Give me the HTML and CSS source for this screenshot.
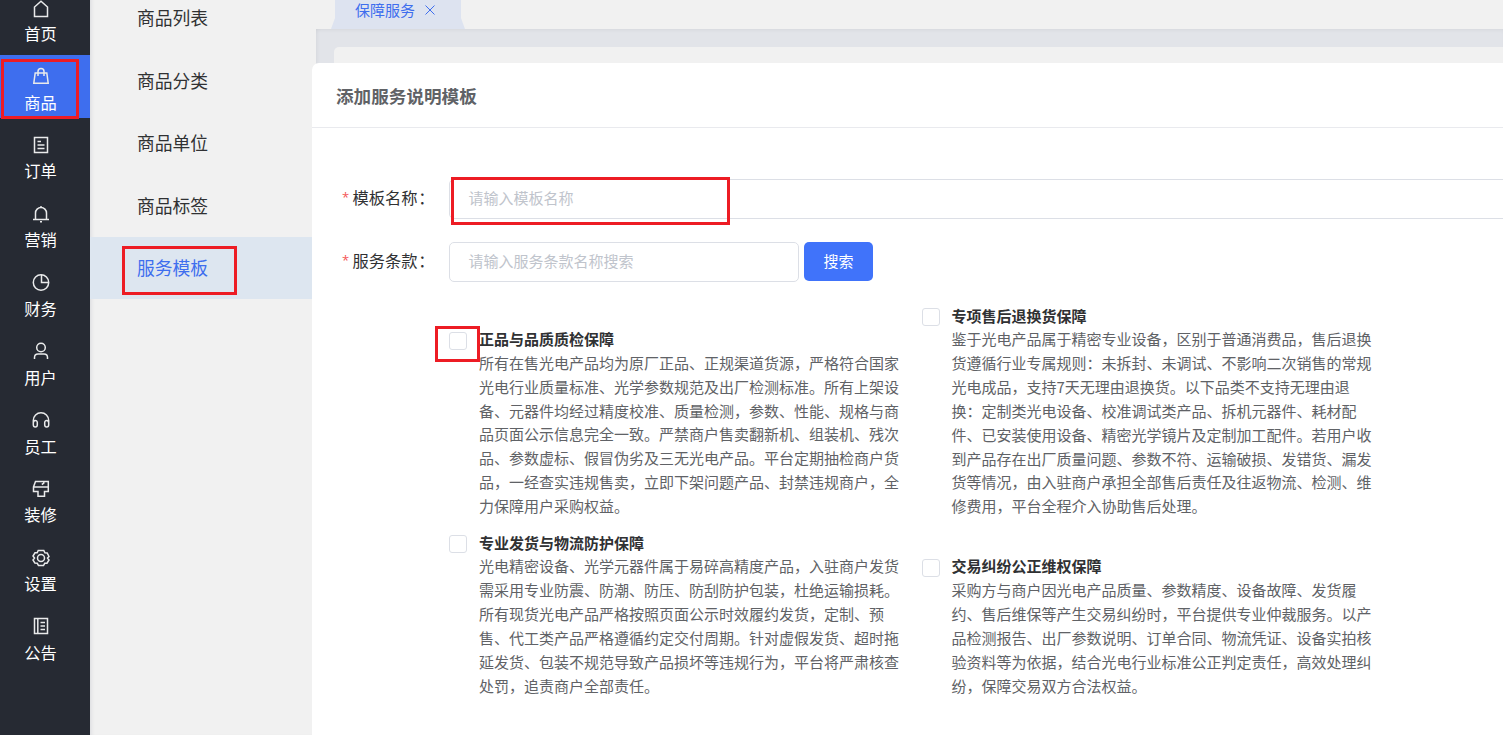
FILE: index.html
```html
<!DOCTYPE html>
<html lang="zh-CN">
<head>
<meta charset="utf-8">
<title>保障服务</title>
<link rel="stylesheet" href="styles.css">
</head>
<body>
<nav class="rail">
  <a class="rail-item home"><svg class="icon" viewBox="0 0 18 18"><path d="M2.500 16.500V7L9 1.300 15.500 7v9.500z"/></svg><span>首页</span></a>
  <a class="rail-item active"><svg class="icon" viewBox="0 0 18 18"><path d="M3.200 6h11.600l1.400 10.200H1.800zM6 9V4.500a3 3 0 0 1 6 0V9"/></svg><span>商品</span><i class="mark mark-rail"></i></a>
  <a class="rail-item"><svg class="icon" viewBox="0 0 18 18"><path d="M2.500 1.500h13v15h-13zM5.500 5.500h3.500M5.500 9h7M5.500 12.500h7"/></svg><span>订单</span></a>
  <a class="rail-item"><svg class="icon" viewBox="0 0 18 18"><path d="M1 14.500h16M3.500 14.500V8a5.500 5.500 0 0 1 11 0v6.500M9 1v1.500M8 16.800h2"/></svg><span>营销</span></a>
  <a class="rail-item"><svg class="icon" viewBox="0 0 18 18"><circle cx="9" cy="9.500" r="7.700"/><path d="M9.500 1.800v7.700h7.200"/></svg><span>财务</span></a>
  <a class="rail-item"><svg class="icon" viewBox="0 0 18 18"><circle cx="9" cy="5.500" r="4.300"/><path d="M2.500 17v-1.500q0-3.500 3.500-3.500h6q3.500 0 3.500 3.500V17"/></svg><span>用户</span></a>
  <a class="rail-item"><svg class="icon" viewBox="0 0 18 18"><path d="M1.300 14V9.500a7.700 7.700 0 0 1 15.400 0V14M1.300 12c0-3.300 4-3.300 4-.5v2.300c0 3-4 3-4 0zM16.700 12c0-3.300-4-3.300-4-.5v2.300c0 3 4 3 4 0z"/></svg><span>员工</span></a>
  <a class="rail-item"><svg class="icon" viewBox="0 0 18 18"><path d="M3.500 1.500h12.800v10h-3.800v4.700H6v-4.700H1.500V7zM1.600 7h14.700M11.800 1.500v1.700L9.800 4.500"/></svg><span>装修</span></a>
  <a class="rail-item"><svg class="icon" viewBox="0 0 18 18"><path d="M6.200 1.500h5.600l1.100 2.300 2.300.2L17 7.500 15.500 9l1.500 2-2 3.200-2.300.1-1.200 2.300H6.500l-1.200-2.300-2.400-.2L1 11l1.500-2L1 7l2-3.200 2.200-.1z"/><circle cx="9" cy="9" r="3.500"/></svg><span>设置</span></a>
  <a class="rail-item"><svg class="icon" viewBox="0 0 18 18"><path d="M2.500 1.500h13v15h-13zM5.800 1.500v15M8.500 5.500h4.500M8.500 9h4.500M8.500 12.500h4.500"/></svg><span>公告</span></a>
</nav>
<aside class="submenu">
  <a class="sub-item">商品列表</a>
  <a class="sub-item">商品分类</a>
  <a class="sub-item">商品单位</a>
  <a class="sub-item">商品标签</a>
  <a class="sub-item active">服务模板<i class="mark mark-sub"></i></a>
</aside>
<main class="main">
  <div class="tabs">
    <div class="tab">保障服务<svg class="close" viewBox="0 0 10 10"><path d="M.5.5l9 9M9.500.5l-9 9"/></svg></div>
  </div>
  <div class="page"><div class="card"></div></div>
</main>
<section class="drawer">
  <header class="drawer-head">添加服务说明模板</header>
  <div class="form">
    <div class="row">
      <label class="label"><b class="star">*</b>模板名称<span class="colon">：</span></label>
      <div class="input wide">请输入模板名称<i class="mark mark-input"></i></div>
    </div>
    <div class="row">
      <label class="label"><b class="star">*</b>服务条款<span class="colon">：</span></label>
      <div class="input search">请输入服务条款名称搜索</div>
      <button class="btn">搜索</button>
    </div>
    <div class="terms">
      <div class="col col-left">
        <article class="term">
          <span class="check low"><i class="mark mark-check"></i></span>
          <div class="term-text">
            <h3>正品与品质质检保障</h3>
            <p>所有在售光电产品均为原厂正品、正规渠道货源，严格符合国家<br>光电行业质量标准、光学参数规范及出厂检测标准。所有上架设<br>备、元器件均经过精度校准、质量检测，参数、性能、规格与商<br>品页面公示信息完全一致。严禁商户售卖翻新机、组装机、残次<br>品、参数虚标、假冒伪劣及三无光电产品。平台定期抽检商户货<br>品，一经查实违规售卖，立即下架问题产品、封禁违规商户，全<br>力保障用户采购权益。</p>
          </div>
        </article>
        <article class="term">
          <span class="check"></span>
          <div class="term-text">
            <h3>专业发货与物流防护保障</h3>
            <p>光电精密设备、光学元器件属于易碎高精度产品，入驻商户发货<br>需采用专业防震、防潮、防压、防刮防护包装，杜绝运输损耗。<br>所有现货光电产品严格按照页面公示时效履约发货，定制、预<br>售、代工类产品严格遵循约定交付周期。针对虚假发货、超时拖<br>延发货、包装不规范导致产品损坏等违规行为，平台将严肃核查<br>处罚，追责商户全部责任。</p>
          </div>
        </article>
      </div>
      <div class="col col-right">
        <article class="term">
          <span class="check"></span>
          <div class="term-text">
            <h3>专项售后退换货保障</h3>
            <p>鉴于光电产品属于精密专业设备，区别于普通消费品，售后退换<br>货遵循行业专属规则：未拆封、未调试、不影响二次销售的常规<br>光电成品，支持7天无理由退换货。以下品类不支持无理由退<br>换：定制类光电设备、校准调试类产品、拆机元器件、耗材配<br>件、已安装使用设备、精密光学镜片及定制加工配件。若用户收<br>到产品存在出厂质量问题、参数不符、运输破损、发错货、漏发<br>货等情况，由入驻商户承担全部售后责任及往返物流、检测、维<br>修费用，平台全程介入协助售后处理。</p>
          </div>
        </article>
        <article class="term">
          <span class="check low"></span>
          <div class="term-text">
            <h3>交易纠纷公正维权保障</h3>
            <p>采购方与商户因光电产品质量、参数精度、设备故障、发货履<br>约、售后维保等产生交易纠纷时，平台提供专业仲裁服务。以产<br>品检测报告、出厂参数说明、订单合同、物流凭证、设备实拍核<br>验资料等为依据，结合光电行业标准公正判定责任，高效处理纠<br>纷，保障交易双方合法权益。</p>
          </div>
        </article>
      </div>
    </div>
  </div>
</section>
</body>
</html>
```

FILE: styles.css
```css
* { box-sizing: border-box; }
body {
  margin: 0;
  width: 1503px;
  height: 735px;
  display: flex;
  position: relative;
  overflow: hidden;
  background: #f1f1f1;
  color: #303133;
  font-family: "Noto Sans CJK SC", sans-serif;
  font-size: 15px;
}

/* icon rail */
.rail {
  width: 90px;
  height: 748.8px;
  margin-top: -13.8px;
  flex: none;
  display: flex;
  flex-direction: column;
  gap: 5.800px;
  background: #262a33;
}
.rail-item {
  position: relative;
  flex: none;
  height: 63px;
  padding: 12px 9px 0 0;
  display: flex;
  flex-direction: column;
  align-items: center;
  color: #fff;
  font-size: 16.250px;
  line-height: 24px;
  gap: 4.600px;
}
.rail-item.home { padding-top: 13.500px; gap: 3.300px; }
.rail-item.active { background: #3e6eee; }
.icon {
  width: 18px;
  height: 18px;
  flex: none;
  fill: none;
  stroke: #e9eaeb;
  stroke-width: 1.500;
}

/* submenu */
.submenu {
  width: 226px;
  height: 748px;
  margin-top: -13px;
  flex: none;
  display: flex;
  flex-direction: column;
  box-shadow: inset 4px 0 4px -3px rgba(0, 20, 60, .1);
}
.sub-item {
  position: relative;
  height: 62.500px;
  flex: none;
  padding-left: 47px;
  font-size: 17.800px;
  line-height: 60px;
}
.sub-item.active { height: 62px; line-height: 61px; background: #dde6f0; color: #3e6eee; }

/* page behind the drawer */
.main { flex: 1; display: flex; flex-direction: column; }
.tabs {
  height: 29px;
  flex: none;
  padding-left: 15px;
}
.tab {
  width: 134px;
  height: 29px;
  padding: 0 0 9px 24px;
  display: flex;
  align-items: center;
  gap: 10px;
  background: #dde3f0;
  clip-path: polygon(3% 0, 97% 0, 97% 62%, 100% 100%, 0 100%, 3% 62%);
  color: #3e6eee;
  line-height: 20px;
}
.close { width: 10px; height: 10px; fill: none; stroke: #3e6eee; stroke-width: 1; }
.page {
  flex: 1;
  padding: 18px 0 0 18px;
  background: #e2e4e9;
  box-shadow: inset 0 3px 4px -2px rgba(0, 0, 0, .05), inset 3px 0 4px -2px rgba(0, 0, 0, .05);
}
.card { height: 100%; background: #f1f1f1; border-radius: 5px 0 0 0; }

/* drawer */
.drawer {
  position: absolute;
  left: 312px;
  top: 63px;
  width: 1191px;
  height: 672px;
  overflow: hidden;
  background: #fff;
  border-radius: 7px 0 0 0;
}
.drawer-head {
  height: 65px;
  padding-left: 24px;
  border-bottom: 1px solid #e9eaee;
  color: #606266;
  font-size: 17.600px;
  font-weight: 700;
  line-height: 65px;
}
.form { padding: 51px 0 0 30px; }
.row { display: flex; height: 40px; margin-bottom: 23px; }
.label {
  width: 107px;
  flex: none;
  display: flex;
  font-size: 16.300px;
  line-height: 37px;
  white-space: nowrap;
}
.colon { margin-left: 0.500px; }
.star { width: 10.500px; color: #f45656; font: 13px/36px "Open Sans", sans-serif; }
.input {
  position: relative;
  height: 40px;
  flex: none;
  padding-left: 18.500px;
  border: 1px solid #dcdfe6;
  border-radius: 5px;
  color: #c0c4cc;
  line-height: 36px;
}
.wide { width: 1200px; }
.search { width: 350px; }
.btn {
  width: 69px;
  height: 39px;
  margin-left: 5px;
  padding: 0 0 2px;
  border: 0;
  border-radius: 5px;
  background: #4073fa;
  color: #fff;
  font: 15px/37px "Noto Sans CJK SC", sans-serif;
}

/* terms */
.terms { display: flex; margin: -1px 0 0 107px; }
.col { width: 472.500px; flex: none; display: flex; flex-direction: column; }
.col-left { padding-top: 23px; gap: 12.800px; }
.col-right { gap: 36.200px; margin-top: -0.500px; }
.term { display: flex; gap: 12px; }
.check {
  position: relative;
  width: 18px;
  height: 18px;
  flex: none;
  margin-top: 4px;
  border: 1px solid #dcdfe6;
  border-radius: 3px;
}
.check.low { margin-top: 5px; }
.term-text { line-height: 23.850px; white-space: nowrap; }
.term-text h3 { margin: 0; font-size: 15px; font-weight: 700; line-height: 23.850px; }
.term-text p { margin: 0; color: #606266; }

/* red highlight frames */
.mark { position: absolute; border: 3px solid #ed1c24; }
.mark-rail { left: 1px; top: 4px; width: 78px; height: 60px; }
.mark-sub { left: 32px; top: 9px; width: 115px; height: 49px; }
.mark-input { left: 1px; top: -3px; width: 279px; height: 48px; }
.mark-check { left: -15px; top: -7px; width: 45px; height: 36px; }
```
